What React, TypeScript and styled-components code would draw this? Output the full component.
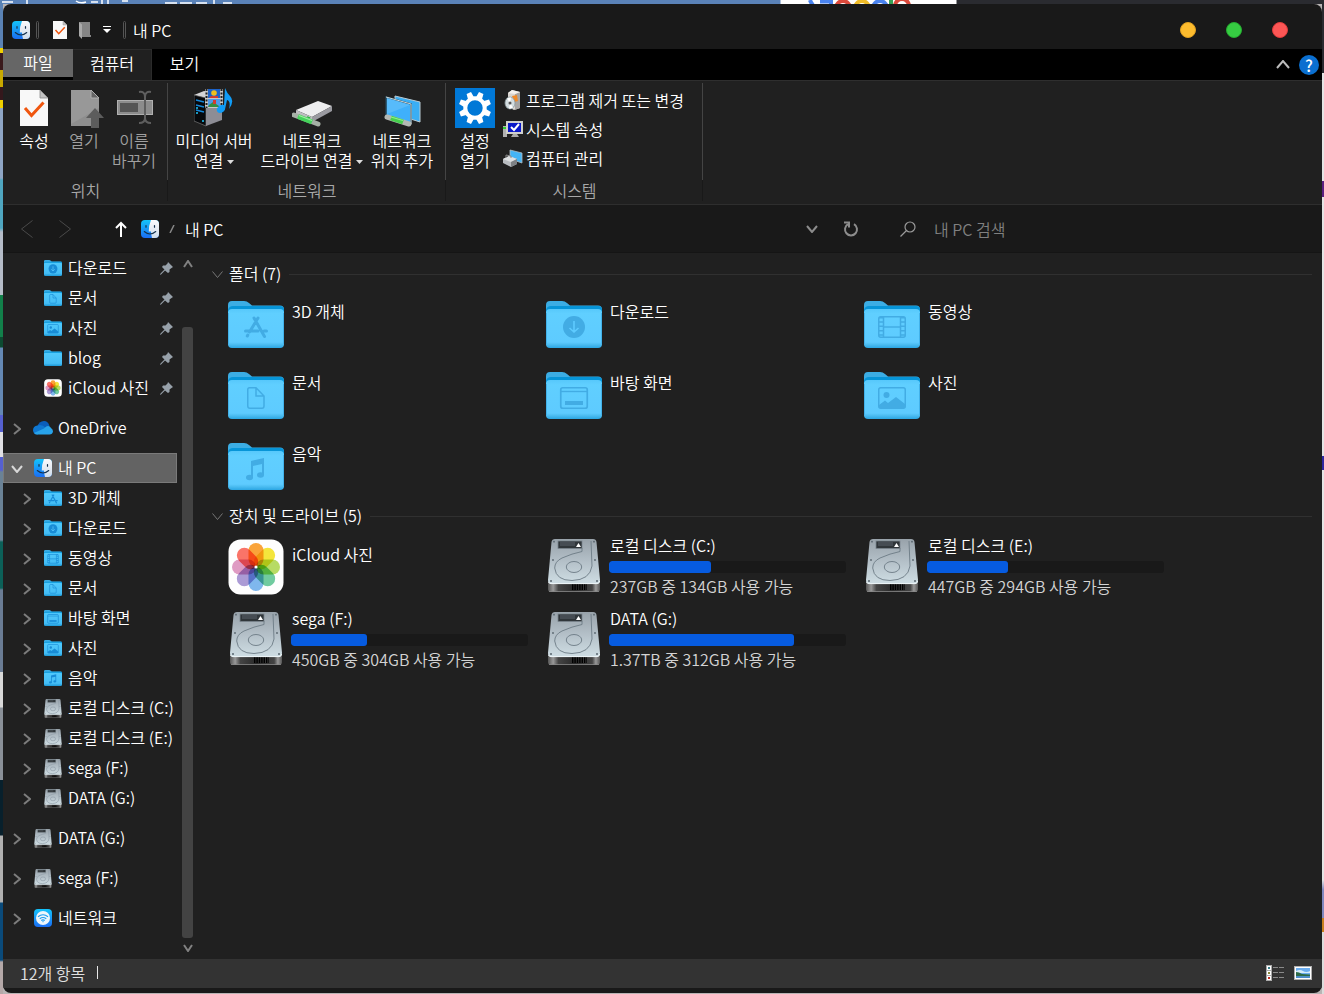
import React from 'react';
import styled, { createGlobalStyle } from 'styled-components';

/* ---------- base ---------- */

const GlobalStyle = createGlobalStyle`
  *, *::before, *::after { box-sizing: border-box; }
  body {
    margin: 0;
    background: #1b1b1b;
    color: #fff;
    font-family: "Noto Sans CJK KR", sans-serif;
    font-size: 16px;
    font-weight: 350;
    line-height: 20px;
  }
  button, input {
    font: inherit;
    color: inherit;
    background: none;
    border: 0;
    padding: 0;
    margin: 0;
  }
  button { cursor: default; white-space: nowrap; }
  svg { display: block; flex: none; }
  ul { list-style: none; margin: 0; padding: 0; }
`;

const Desktop = styled.div`
  min-height: 100vh;
  display: flex;
  flex-direction: column;
  background:
    linear-gradient(#5a82b4 48px, #f0d000 48px 53px, #3a1a1c 53px 70px, #c8a800 70px 87px, #34181c 87px 100px,
      #f0d000 100px 108px, #8ea5c4 108px 178px, #4fa6c0 180px 228px, #b5bcc8 232px 295px, #12804a 295px 337px,
      #0c4a30 337px 347px, #6488b4 348px 415px, #5560d0 415px 432px, #e0e0e4 432px 457px, #5560d0 457px 470px,
      #6a8296 472px 540px, #0c6058 542px 588px, #6a7c94 590px 672px, #d8d8d8 672px 707px, #8a9098 708px 780px,
      #08202c 780px 835px, #b0b0b0 836px 902px, #0a4a7a 903px 960px, #b4a8a8 962px) left / 3px 100% no-repeat,
    linear-gradient(#2a2b30 73px, #e4e4e4 73px 181px, #5a2080 181px 197px, #e4e4e4 197px 456px, #3028a0 456px 470px,
      #e4e4e4 470px 880px, #8088c0 890px 918px, #c88020 918px 932px, #dcdcdc 932px) right / 2px 100% no-repeat,
    linear-gradient(90deg, #5a82b8 780px, #fff 781px 956px, #2a2b30 957px) top / 100% 4px no-repeat,
    #b8b4b4;
`;

const DesktopStrip = styled.div`
  height: 4px;
  overflow: hidden;
`;

const Window = styled.div`
  flex: 1;
  display: flex;
  flex-direction: column;
  margin: 0 2px 1px 3px;
  padding-bottom: 5px;
  border-radius: 8px;
  overflow: hidden;
  background: #191919;
`;

/* ---------- title bar ---------- */

const TitleBar = styled.header`
  display: flex;
  align-items: center;
  height: 45px;
  padding: 7px 34px 0 9px;
`;

const TitleGrip = styled.span<{ $before: number; $after: number }>`
  width: 3px;
  height: 18px;
  margin: 0 ${(p) => p.$after}px 0 ${(p) => p.$before}px;
  border: 1px solid #555;
  border-radius: 2px;
`;

const QuickAccess = styled.div`
  display: flex;
  align-items: center;
  gap: 11px;
`;

const Title = styled.span`
  flex: 1;
`;

const WindowControls = styled.div`
  display: flex;
  gap: 30px;
`;

const ControlDot = styled.button<{ $color: string; $edge: string }>`
  width: 16px;
  height: 16px;
  border-radius: 50%;
  background: ${(p) => p.$color};
  border: 1px solid ${(p) => p.$edge};
`;

/* ---------- ribbon ---------- */

const TabRow = styled.nav`
  display: flex;
  align-items: stretch;
  height: 31px;
  background: #000;
`;

const FileTab = styled.button`
  width: 70px;
  height: 28px;
  padding-bottom: 3px;
  background: #666;
`;

const Tab = styled.button<{ $active?: boolean }>`
  width: 79px;
  padding: 0 ${(p) => (p.$active ? '0' : '13px')} 4px 0;
  background: ${(p) => (p.$active ? '#202020' : 'transparent')};
  border: solid ${(p) => (p.$active ? '#2b2b2b' : 'transparent')};
  border-width: 1px 1px 0 0;
`;

const TabTools = styled.div`
  display: flex;
  align-items: center;
  gap: 9px;
  margin-left: auto;
  padding-right: 3px;
`;

const HelpButton = styled.button`
  width: 20px;
  height: 20px;
  border-radius: 50%;
  background: #0a6fd0;
  font-weight: 500;
`;

const Ribbon = styled.section`
  display: flex;
  height: 125px;
  padding-top: 2px;
  background: #202020;
  border: solid #2e2e2e;
  border-width: 1px 0;
`;

const RibbonGroup = styled.div<{ $width: number }>`
  display: flex;
  flex-direction: column;
  min-width: ${(p) => p.$width}px;
  background: linear-gradient(#444 97px, #191919 97px) right top / 1px 118px no-repeat;
`;

const RibbonTools = styled.div<{ $inset: number }>`
  display: flex;
  align-items: flex-start;
  gap: 2px;
  height: 97px;
  padding: 5px 0 0 ${(p) => p.$inset}px;
`;

const RibbonButton = styled.button<{ $muted?: boolean; $width: number }>`
  display: flex;
  flex-direction: column;
  align-items: center;
  gap: 2px;
  width: ${(p) => p.$width}px;
  color: ${(p) => (p.$muted ? '#a0a0a0' : '#fff')};
`;

const IconSlot = styled.span`
  display: flex;
  align-items: center;
  justify-content: center;
  height: 40px;
`;

const RibbonText = styled.span`
  text-align: center;
`;

const CaretIcon = styled.svg`
  display: inline-block;
  margin: 0 0 2px 4px;
  vertical-align: middle;
`;

const RibbonList = styled.div`
  display: flex;
  flex-direction: column;
  gap: 9px;
  margin: 2px 0 0 5px;
`;

const RibbonListButton = styled.button`
  display: flex;
  align-items: center;
  gap: 3px;
  height: 20px;
`;

const GroupLabel = styled.span`
  text-align: center;
  color: #a8a8a8;
`;

/* ---------- address bar ---------- */

const AddressBar = styled.div`
  display: flex;
  align-items: center;
  height: 48px;
  padding: 0 20px 0 18px;
  background: #191919;
  border-bottom: 1px solid #151515;
`;

const NavButtons = styled.div`
  display: flex;
  align-items: center;
  gap: 26px;
  width: 120px;
`;

const UpButton = styled.button`
  margin-left: 18px;
`;

const Crumbs = styled.div`
  flex: 1;
  display: flex;
  align-items: center;
  gap: 10px;
`;

const AddressTools = styled.div`
  display: flex;
  align-items: center;
  gap: 25px;
`;

const SearchBox = styled.label`
  display: flex;
  align-items: center;
  gap: 18px;
  width: 402px;
  margin-left: 41px;
`;

const SearchInput = styled.input`
  flex: 1;
  min-width: 0;
  outline: 0;
  &::placeholder { color: #808080; opacity: 1; }
`;

/* ---------- body ---------- */

const Body = styled.div`
  flex: 1;
  display: flex;
  background: #202020;
`;

const Sidebar = styled.aside`
  display: flex;
  flex: none;
  gap: 5px;
`;

const Tree = styled.ul`
  width: 174px;
`;

const TreeRow = styled.li<{ $gapTop?: boolean; $selected?: boolean; $child?: boolean }>`
  display: flex;
  align-items: center;
  height: 30px;
  margin-top: ${(p) => (p.$gapTop ? '10px' : '0')};
  padding-left: ${(p) => (p.$child ? '16px' : '6px')};
  background: ${(p) => (p.$selected ? '#636363' : 'transparent')};
  box-shadow: ${(p) => (p.$selected ? 'inset 0 0 0 1px #7a7a7a' : 'none')};
  white-space: nowrap;
`;

const Expander = styled.span`
  display: flex;
  justify-content: center;
  width: 16px;
  margin-right: 8px;
  padding-top: 2px;
`;

const TreeIcon = styled.span`
  display: flex;
  justify-content: center;
  width: 20px;
  margin-right: 5px;
`;

const TreeLabel = styled.span`
  flex: 1;
  padding-bottom: 2px;
`;

const PinSlot = styled.span`
  margin-right: 4px;
`;

const ScrollBar = styled.div`
  display: flex;
  flex-direction: column;
  align-items: center;
  width: 11px;
  padding: 7px 0 7px;
`;

const ScrollThumb = styled.div`
  flex: 1;
  width: 11px;
  margin: 59px 0 6px;
  border-radius: 3px;
  background: #434343;
`;

const Main = styled.main`
  flex: 1;
  padding: 6px 10px 0 19px;
`;

const SectionHeader = styled.h2<{ $space: number }>`
  display: flex;
  align-items: center;
  gap: 6px;
  height: 30px;
  margin: 0 0 ${(p) => p.$space}px;
  font-size: 16px;
  font-weight: inherit;
  white-space: nowrap;
  &::after {
    content: "";
    flex: 1;
    height: 1px;
    margin-left: 2px;
    background: #303030;
  }
`;

const SectionTitle = styled.span`
  padding-bottom: 2px;
`;

const ItemGrid = styled.ul<{ $row: number; $gap: number }>`
  display: grid;
  grid-template-columns: repeat(auto-fill, 318px);
  grid-auto-rows: ${(p) => p.$row}px;
  row-gap: ${(p) => p.$gap}px;
  margin-left: 16px;
`;

const FolderTile = styled.li`
  display: flex;
  gap: 8px;
`;

const FolderName = styled.span``;

const DriveTile = styled.li`
  display: flex;
  gap: 7px;
`;

const DriveIconSlot = styled.span`
  margin-top: 4px;
`;

const DriveInfo = styled.div<{ $low?: boolean }>`
  display: flex;
  flex-direction: column;
  width: 237px;
  padding-top: ${(p) => (p.$low ? '9px' : '0')};
`;

const DriveName = styled.span`
  padding-left: 1px;
`;

const Gauge = styled.div`
  height: 12px;
  margin: 6px 0 3px;
  border-radius: 3px;
  background: #191919;
  overflow: hidden;
`;

const GaugeFill = styled.div`
  height: 100%;
  border-radius: 3px;
  background: #065be0;
`;

const Usage = styled.span`
  padding-left: 1px;
  color: #d4d4d4;
`;

/* ---------- status bar ---------- */

const StatusBar = styled.footer`
  display: flex;
  align-items: center;
  gap: 12px;
  height: 29px;
  padding: 0 10px 2px 17px;
  background: #333;
  color: #e0e0e0;
`;

const StatusDivider = styled.span`
  width: 1px;
  height: 13px;
  background: #e8e8e8;
`;

const ViewButtons = styled.div`
  display: flex;
  align-items: center;
  gap: 10px;
  margin-left: auto;
`;

/* ---------- icons ---------- */

type Dir = 'up' | 'down' | 'left' | 'right';

const Chevron = ({ dir, w = 10, h = 6, color = '#888', stroke = 2 }: { dir: Dir; w?: number; h?: number; color?: string; stroke?: number }) => {
  const s = stroke / 2;
  const d = {
    down: `M${s} ${s}L${w / 2} ${h - s}L${w - s} ${s}`,
    up: `M${s} ${h - s}L${w / 2} ${s}L${w - s} ${h - s}`,
    right: `M${s} ${s}L${w - s} ${h / 2}L${s} ${h - s}`,
    left: `M${w - s} ${s}L${s} ${h / 2}L${w - s} ${h - s}`,
  }[dir];
  return (
    <svg width={w} height={h} aria-hidden="true">
      <path d={d} fill="none" stroke={color} strokeWidth={stroke} />
    </svg>
  );
};

const Caret = () => (
  <CaretIcon width="7" height="4" aria-hidden="true"><path d="M0 0H7L3.5 4Z" fill="#ddd" /></CaretIcon>
);

const FinderIcon = ({ size = 18 }: { size?: number }) => (
  <svg width={size} height={size} viewBox="0 0 36 36" aria-hidden="true">
    <defs>
      <linearGradient id="fBlue" x1="0" y1="0" x2="0" y2="1">
        <stop offset="0" stopColor="#14c4fb" /><stop offset="1" stopColor="#1a6df2" />
      </linearGradient>
      <linearGradient id="fWhite" x1="0" y1="0" x2="0" y2="1">
        <stop offset="0" stopColor="#fbfafc" /><stop offset="1" stopColor="#cfdcea" />
      </linearGradient>
    </defs>
    <rect width="36" height="36" rx="8" fill="url(#fBlue)" />
    <path d="M20 0H28Q36 0 36 8V28Q36 36 28 36H22Q20.500 31 20 23H15.500Q15 12 20 0Z" fill="url(#fWhite)" />
    <path d="M10 11V14.500M27 11V14.500" stroke="#14304c" strokeWidth="2.400" strokeLinecap="round" />
    <path d="M6.500 23Q18 33 29.500 23" fill="none" stroke="#14304c" strokeWidth="2.200" strokeLinecap="round" />
  </svg>
);

const CheckDoc = ({ w, h }: { w: number; h: number }) => (
  <svg width={w} height={h} viewBox="0 0 28 36" aria-hidden="true">
    <path d="M0 0H20L28 8V36H0Z" fill="#f8f8f8" />
    <path d="M20 0V8H28Z" fill="#c4c4c4" stroke="#8a8a8a" strokeWidth="0.800" />
    <path d="M5 18L11.500 25.500L23.500 12.500" fill="none" stroke="#f0560f" strokeWidth="3" />
  </svg>
);

const GreyFolder = () => (
  <svg width="14" height="18" viewBox="0 0 14 18" aria-hidden="true">
    <path d="M1 1H12V14H13V16H4Z" fill="#858585" /><path d="M1 1L4 3.500V18L1 15Z" fill="#aaa" />
  </svg>
);

const QuickMenu = () => (
  <svg width="8" height="8" aria-hidden="true"><path d="M0 0.500H8" stroke="#fff" /><path d="M0 3H8L4 7Z" fill="#fff" /></svg>
);

const OpenDoc = () => (
  <svg width="40" height="40" viewBox="0 0 40 40" aria-hidden="true">
    <path d="M7 2H27L35 10V38H7Z" fill="#8e8e8e" />
    <path d="M7 2H27L35 10V20L7 36Z" fill="#989898" />
    <path d="M27 2V10H35Z" fill="#666" stroke="#b0b0b0" />
    <path d="M31 20L40 30H35V40H27V30H22Z" fill="#5c5c5c" />
  </svg>
);

const RenameIcon = () => (
  <svg width="40" height="40" viewBox="0 0 40 40" aria-hidden="true">
    <rect x="3" y="12" width="36" height="15" fill="#b0b0b0" />
    <rect x="4" y="13" width="34" height="13" fill="#8c8c8c" />
    <rect x="6" y="15" width="18" height="9" fill="#555" />
    <path d="M25 4Q31 3 31 9V30Q31 35 25 35M37 4Q31 3 31 9M31 30Q31 35 37 35" fill="none" stroke="#5e5e5e" strokeWidth="2" />
  </svg>
);

const MediaServerIcon = () => (
  <svg width="40" height="40" viewBox="0 0 40 40" aria-hidden="true">
    <path d="M0 7L10 3L28 6L12 10Z" fill="#d4d4d6" />
    <path d="M0 7L12 10V38L0 33Z" fill="#07090c" stroke="#777" strokeWidth="0.700" />
    <path d="M12 10L28 6V32L12 38Z" fill="#8d8d95" />
    <path d="M2 12L10 14M2 17L10 19M2 22L10 24" stroke="#1587d8" strokeWidth="1.300" />
    <path d="M2 20h2M2 25h2M8 33h2" stroke="#20c8f8" strokeWidth="1.600" />
    <rect x="11" y="1" width="18" height="19" fill="#c8c8c8" />
    <rect x="14" y="1" width="12" height="9" fill="#1c62c8" /><rect x="14" y="11" width="12" height="8" fill="#4e9bea" />
    <path d="M12.500 1V20M27.500 1V20" stroke="#222" strokeWidth="2" strokeDasharray="2 1.500" />
    <circle cx="20" cy="5" r="2.800" fill="#f0c020" /><path d="M17 8H24V10H15Z" fill="#d43a30" />
    <path d="M15 17L19 14L25 18V19H14Z" fill="#348f42" /><path d="M19 12H22V16H19Z" fill="#d43a30" />
    <path d="M31 0Q33 5 36 8Q41 13 35 21Q37 13 33 12L31.500 19Q31 25 25 25Q21 23 24 19Q27 16 30 17Z" fill="#109cf6" />
  </svg>
);

const NetDriveIcon = () => (
  <svg width="40" height="40" viewBox="0 0 40 40" aria-hidden="true">
    <path d="M4 22L26 13L40 18L20 29Z" fill="#eeeeef" />
    <path d="M4 22L20 29V34L4 27Z" fill="#bdbdbf" /><path d="M20 29L40 18V23L20 34Z" fill="#9a9aa0" />
    <path d="M15 29L18 30.300" stroke="#16b82b" strokeWidth="1.800" />
    <path d="M2 27L26 36" stroke="#a6b0a6" strokeWidth="5" strokeLinecap="round" />
    <path d="M6 28.500L20 34" stroke="#44d25a" strokeWidth="5" /><path d="M7 27.500L20 32.500" stroke="#9bf0a0" strokeWidth="1.300" />
  </svg>
);

const NetPlaceIcon = () => (
  <svg width="40" height="40" viewBox="0 0 40 40" aria-hidden="true">
    <path d="M13 8L38 14V34L13 26Z" fill="#3aaef4" stroke="#b9cbd4" strokeWidth="1" />
    <path d="M4 9L29 16V36L4 29Z" fill="#3fb0fb" stroke="#26404e" strokeWidth="1.500" />
    <path d="M4 9L29 16V36" fill="none" stroke="#c9d8de" strokeWidth="1" />
    <path d="M5 10L28 17L5 26Z" fill="#68c3fc" opacity="0.600" />
    <path d="M5 29L27 36" stroke="#b4b8b4" strokeWidth="5" strokeLinecap="round" />
    <path d="M9 30L21 34" stroke="#46cf4d" strokeWidth="5" /><path d="M9 29L21 32.500" stroke="#90ec90" strokeWidth="1.200" />
  </svg>
);

const SettingsIcon = () => (
  <svg width="40" height="40" viewBox="0 0 40 40" aria-hidden="true">
    <rect width="40" height="40" fill="#0078d7" />
    <g fill="#fff">
      {[22.5, 67.5, 112.5, 157.5, 202.5, 247.5, 292.5, 337.5].map((a) => (
        <path key={a} d="M16.800 10L17.600 3.800H22.400L23.200 10Z" transform={`rotate(${a} 20 20)`} />
      ))}
    </g>
    <circle cx="20" cy="20" r="9.700" fill="none" stroke="#fff" strokeWidth="4" />
  </svg>
);

const ProgramsIcon = () => (
  <svg width="20" height="20" viewBox="0 0 20 20" aria-hidden="true">
    <path d="M5 3L9 0L17 2V18L11 20L5 17Z" fill="#d9d5d0" /><path d="M12 4L17 2V18L12 20Z" fill="#a7a5a3" />
    <path d="M5 3L9 0L17 2L12 4Z" fill="#f3f1ee" /><path d="M9 6L14 5L15 11L11 12Z" fill="#f08a28" />
    <ellipse cx="7" cy="13" rx="5" ry="6" fill="#d3dde0" stroke="#88969a" strokeWidth="0.800" />
    <path d="M7 13L4 8.500Q6 7 8 7.500ZM7 13L10 17.500Q8 19 6 18.500Z" fill="#fff" /><circle cx="7" cy="13" r="1.500" fill="#555" />
  </svg>
);

const SystemIcon = () => (
  <svg width="20" height="20" viewBox="0 0 20 20" aria-hidden="true">
    <rect x="0" y="7" width="4" height="11" fill="#b0b0b0" /><rect x="0" y="8" width="3" height="2" fill="#2fd02f" />
    <path d="M3 2H20V15H3Z" fill="#d0d0cc" /><rect x="5" y="4" width="13" height="9" fill="#0a18c8" />
    <path d="M8 8L11 11L16 5" fill="none" stroke="#fff" strokeWidth="2" /><path d="M10 15H14L16 18H8Z" fill="#aaa" />
  </svg>
);

const ManageIcon = () => (
  <svg width="20" height="20" viewBox="0 0 20 20" aria-hidden="true">
    <path d="M7 2L19 5V15L7 11Z" fill="#45b4f5" stroke="#b0bcc4" strokeWidth="0.800" />
    <path d="M0 11L6 8L14 11V16L8 19L0 15Z" fill="#b8bcc0" /><path d="M0 11L6 8L14 11L8 14Z" fill="#dde0e2" />
    <path d="M3 10V7L8 8V10" fill="none" stroke="#888" /><path d="M8 14V19L14 16V11Z" fill="#7d8185" />
  </svg>
);

const UpArrow = () => (
  <svg width="12" height="16" viewBox="0 0 12 16" aria-hidden="true">
    <path d="M6 16V2M1 7L6 2L11 7" fill="none" stroke="#fff" strokeWidth="2" />
  </svg>
);

const RefreshIcon = () => (
  <svg width="16" height="16" viewBox="0 0 16 16" aria-hidden="true">
    <path d="M5 3.200A6 6 0 1 0 11 3.200" fill="none" stroke="#8c8c8c" strokeWidth="2" />
    <path d="M1 1.500H6V6.500" fill="none" stroke="#8c8c8c" strokeWidth="2" />
  </svg>
);

const SearchIcon = () => (
  <svg width="16" height="16" viewBox="0 0 16 16" aria-hidden="true">
    <circle cx="10" cy="6" r="5" fill="none" stroke="#9a9a9a" strokeWidth="1.200" />
    <path d="M6.500 9.500L0.500 15.500" stroke="#9a9a9a" strokeWidth="1.200" />
  </svg>
);

const PinIcon = () => (
  <svg width="13" height="13" viewBox="0 0 13 13" aria-hidden="true">
    <path d="M8 0L13 5L11.500 6L9.500 7.500L9.500 10L8 11L5 8.500L1 12.500L0 13L0.500 11.500L4.500 7.500L2 5L3 3.500H5.500L7.500 1.500Z" fill="#97a1aa" />
  </svg>
);

type Glyph = 'apps' | 'download' | 'movie' | 'doc' | 'desktop' | 'photo' | 'music' | 'none';

const glyphs: Record<Glyph, (c: string) => React.ReactNode> = {
  none: () => null,
  apps: (c) => (
    <g stroke={c} strokeWidth="3" strokeLinecap="round" fill="none">
      <path d="M17.500 30H30M36 30H38.500M26 17L36.500 35.500M30 17L21.500 31M19.800 34L19.300 35" />
    </g>
  ),
  download: (c) => (
    <g><circle cx="28" cy="26" r="11" fill={c} /><path d="M28 20V31M23.500 27L28 31L32.500 27" fill="none" stroke="#5ecbff" strokeWidth="1.600" /></g>
  ),
  movie: (c) => (
    <g fill="none" stroke={c}>
      <rect x="14.750" y="15.750" width="26.500" height="20.500" rx="2" strokeWidth="1.500" />
      <path d="M19.500 16V36M36.500 16V36" strokeWidth="1.500" /><path d="M19 26H37" strokeWidth="1.500" />
      <path d="M17 16V36M39 16V36" strokeWidth="4" strokeDasharray="1.500 2.800" />
    </g>
  ),
  doc: (c) => (
    <path d="M21.500 15.750H28L36 24V34Q36 36.250 34 36.250H22Q19.750 36.250 19.750 34V17.500Q19.750 15.750 21.500 15.750ZM28 16V24H36" fill="none" stroke={c} strokeWidth="1.500" />
  ),
  desktop: (c) => (
    <g><rect x="14.750" y="15.750" width="26.500" height="20.500" rx="2" fill="none" stroke={c} strokeWidth="1.700" />
      <path d="M15 19.500H41" stroke={c} strokeWidth="1.400" /><rect x="19" y="29" width="18" height="4" fill={c} /></g>
  ),
  photo: (c) => (
    <g><rect x="14.750" y="15.750" width="26.500" height="20.500" rx="2" fill="none" stroke={c} strokeWidth="1.500" />
      <circle cx="22.500" cy="23" r="3" fill={c} /><path d="M15 33L21 28.500L24 31L32 25L41 32V36H15Z" fill={c} /></g>
  ),
  music: (c) => (
    <g fill={c}><path d="M23 18L36 15V32H34V21L25 23V35H23Z" /><ellipse cx="21.500" cy="34.500" rx="3.500" ry="2.700" /><ellipse cx="32.500" cy="32" rx="3.500" ry="2.700" /></g>
  ),
};

const FolderIcon = ({ glyph, small }: { glyph: Glyph; small?: boolean }) => (
  <svg width={small ? 18 : 56} height={small ? 16 : 47} viewBox="0 0 56 47" preserveAspectRatio="none" aria-hidden="true">
    <defs>
      <linearGradient id="folderFront" x1="0" y1="0" x2="0" y2="1">
        <stop offset="0" stopColor="#57c8fb" /><stop offset="0.120" stopColor="#60cfff" /><stop offset="0.850" stopColor="#5ecbff" />
        <stop offset="0.910" stopColor="#4cbdf2" /><stop offset="1" stopColor="#2ba6e3" />
      </linearGradient>
      <linearGradient id="folderSmall" x1="0" y1="0" x2="0" y2="1">
        <stop offset="0" stopColor="#50c9fc" /><stop offset="0.800" stopColor="#44bdf5" /><stop offset="1" stopColor="#1c98d6" />
      </linearGradient>
    </defs>
    <path d="M0 4Q0 0 4 0H16Q19 0 21 2L24 4.500H52Q56 4.500 56 8.500V20H0Z" fill="#3cade4" />
    <path d="M0 9Q1 5 5 5H52Q56 5 56 9V20H0Z" fill="#0795d8" />
    <path d="M0 12Q0 8 4 8H52Q56 8 56 12V43Q56 47 52 47H4Q0 47 0 43Z" fill={small ? 'url(#folderSmall)' : 'url(#folderFront)'} />
    {!small && <path d="M0.500 12V43M55.500 12V43" stroke="#42b2ea" strokeWidth="1" />}
    {small
      ? <g transform="translate(-7 -6.500) scale(1.250)">{glyphs[glyph]('#188cd6')}</g>
      : glyphs[glyph]('#42ace4')}
  </svg>
);

const petals = ['#fba53a', '#f5e63c', '#b8dc64', '#70cca0', '#80b8ee', '#ac9cd6', '#e09cc4', '#fb7468'];

const PhotosIcon = ({ size }: { size: number }) => (
  <svg width={size} height={size} viewBox="0 0 56 56" style={{ isolation: 'isolate' }} aria-hidden="true">
    <rect x="0.500" y="0.500" width="55" height="55" rx="12" fill="#fefefe" />
    {petals.map((c, i) => (
      <rect key={c} x="20.500" y="4" width="15" height="24" rx="7.500" fill={c} transform={`rotate(${i * 45} 28 28)`} style={{ mixBlendMode: 'multiply' }} />
    ))}
    <circle cx="28" cy="28" r="1.600" fill="#fff" />
  </svg>
);

const DriveIcon = ({ small }: { small?: boolean }) => (
  <svg width={small ? 18 : 56} height={small ? 19 : 56} viewBox={small ? '1 0 54 54' : '0 0 56 56'} preserveAspectRatio="none" aria-hidden="true">
    <defs>
      <linearGradient id="hddTop" x1="0" y1="0" x2="0" y2="1">
        <stop offset="0" stopColor="#98a2aa" /><stop offset="0.500" stopColor="#b4c0c8" /><stop offset="1" stopColor="#cfdee4" />
      </linearGradient>
      <linearGradient id="hddBase" x1="0" y1="0" x2="1" y2="0">
        <stop offset="0" stopColor="#555" /><stop offset="0.100" stopColor="#999" /><stop offset="0.200" stopColor="#444" />
        <stop offset="0.500" stopColor="#2a2a2a" /><stop offset="0.850" stopColor="#444" /><stop offset="0.920" stopColor="#999" /><stop offset="1" stopColor="#555" />
      </linearGradient>
    </defs>
    <path d="M2 42H54V50Q54 53 51 53H5Q2 53 2 50Z" fill="url(#hddBase)" />
    <path d="M26 48H41" stroke="#000" strokeWidth="6" strokeDasharray="1.400 1" />
    <path d="M3 52.500H53" stroke="#888" strokeWidth="0.800" />
    <path d="M9 0H47Q50 0 50.500 3L54 41Q54 45 51 45H5Q2 45 2 41L5.500 3Q6 0 9 0Z" fill="url(#hddTop)" />
    <path d="M2.500 43Q3.500 44.600 5 44.600H51Q53 44.600 53.700 42" fill="none" stroke="#eef6f8" strokeWidth="1" />
    <g fill="none" stroke={small ? '#8e9ca6' : '#6c7a84'} strokeWidth={small ? 1.8 : 0.9}>
      <path d="M36 9V12.500Q26 14.500 16 19Q8.700 22.500 8.700 29Q10 41.500 26 41.500Q44 41 46 27L45 2" />
      <ellipse cx="28" cy="28" rx="7.700" ry="5.500" />
    </g>
    <rect x="12" y="2" width="24" height="7.500" fill="#30363a" stroke="#7a868e" strokeWidth="0.800" />
    <path d="M14 4H29M14 6H29" stroke="#687078" strokeWidth="0.800" />
    {!small && <path d="M30 8H35L32.500 4Z" fill="#fff" />}
    <g fill="#59656e"><circle cx="8" cy="2.700" r="0.900" /><circle cx="48" cy="2.700" r="0.900" /><circle cx="7" cy="21" r="0.900" />
      <circle cx="49" cy="21" r="0.900" /><circle cx="5" cy="42" r="1" /><circle cx="51" cy="42" r="1" /></g>
  </svg>
);

const OneDriveIcon = () => (
  <svg width="20" height="14" viewBox="0 0 20 14" aria-hidden="true">
    <path d="M4 6Q6 0 11 0Q15 0 16.500 5L8 9Z" fill="#0a5ebc" />
    <path d="M4.500 4.500Q0 5 0 9.500Q0.500 13.500 4.500 13.500L13 7Q9 3 4.500 4.500Z" fill="#0f78d2" />
    <path d="M12 6.500Q16 3.500 18 7Q20 8 20 10.500Q19.500 13.500 16.500 13.500H4.500Q2 13.500 1 12L11 7.500Z" fill="#28a3ea" />
  </svg>
);

const NetworkIcon = () => (
  <svg width="18" height="18" viewBox="0 0 36 36" aria-hidden="true">
    <rect width="36" height="36" rx="8" fill="url(#fBlue)" />
    <circle cx="18" cy="18" r="14" fill="#eef6fb" />
    <g fill="none" stroke="#1f9df0" strokeWidth="2.400"><path d="M8 15.500Q18 7.500 28 15.500" /><path d="M11.500 19.500Q18 14.500 24.500 19.500" /><path d="M14.500 23Q18 20.500 21.500 23" /></g>
    <path d="M16 25L18 27L20 25Q18 23.500 16 25Z" fill="#1f9df0" />
  </svg>
);

const ListViewIcon = () => (
  <svg width="18" height="16" viewBox="0 0 18 16" aria-hidden="true">
    <rect width="6" height="16" fill="#aaa" />
    <path d="M1 1H5V5H1ZM1 6H5V10H1ZM1 11H5V15H1Z" fill="#fff" />
    <rect x="2" y="2" width="2" height="2" fill="#36808c" /><rect x="2" y="7" width="2" height="2" fill="#8a8a3c" /><rect x="2" y="12" width="2" height="2" fill="#c42c20" />
    <path d="M7 2.500H12M13 2.500H18M7 7.500H12M13 7.500H18M7 12.500H12M13 12.500H18" stroke="#8a8a8a" />
  </svg>
);

const TileViewIcon = () => (
  <svg width="18" height="14" viewBox="0 0 18 14" aria-hidden="true">
    <rect width="18" height="14" fill="#b0b0b0" /><rect x="1" y="1" width="16" height="12" fill="#fff" />
    <rect x="2" y="2" width="14" height="10" fill="#6caef0" /><path d="M2 5Q6 3 9 5T16 5V7H2Z" fill="#d5ebfa" />
    <path d="M2 6Q5 6 8 8L16 8.500V10H2Z" fill="#2d6a48" /><path d="M2 10H16V12H2Z" fill="#4c8cc8" />
  </svg>
);

const DesktopEdge = () => (
  <svg width="1324" height="4" aria-hidden="true">
    <g fill="none" strokeWidth="4">
      <path d="M810 0Q811 3 813 5M820 1.500H831V6" stroke="#4a84f0" />
      <circle cx="843" cy="8" r="7" stroke="#dc4a3c" /><circle cx="862" cy="8" r="7" stroke="#f0bc28" />
      <circle cx="880" cy="8" r="7" stroke="#4a84f0" /><path d="M891 0V4" stroke="#38a255" /><circle cx="902" cy="6" r="7" stroke="#dc4a3c" />
    </g>
    <path d="M2 2H13M27 0V4M76 1Q80 4 86 2M91 2H98M102 0V4M108 0V4M122 1H128M165 3H177M180 3H192M196 3H207M214 0V4M223 3H232" stroke="#fff" strokeWidth="1.500" fill="none" />
  </svg>
);

/* ---------- data ---------- */

interface TreeEntry {
  label: string;
  icon: React.ReactNode;
  level: 'pinned' | 'child' | 'root';
  open?: boolean;
}

const smallFolder = (g: Glyph) => <FolderIcon glyph={g} small />;
const smallDrive = <DriveIcon small />;

const tree: TreeEntry[] = [
  { label: '다운로드', icon: smallFolder('download'), level: 'pinned' },
  { label: '문서', icon: smallFolder('doc'), level: 'pinned' },
  { label: '사진', icon: smallFolder('photo'), level: 'pinned' },
  { label: 'blog', icon: smallFolder('none'), level: 'pinned' },
  { label: 'iCloud 사진', icon: <PhotosIcon size={18} />, level: 'pinned' },
  { label: 'OneDrive', icon: <OneDriveIcon />, level: 'root' },
  { label: '내 PC', icon: <FinderIcon />, level: 'root', open: true },
  { label: '3D 개체', icon: smallFolder('apps'), level: 'child' },
  { label: '다운로드', icon: smallFolder('download'), level: 'child' },
  { label: '동영상', icon: smallFolder('movie'), level: 'child' },
  { label: '문서', icon: smallFolder('doc'), level: 'child' },
  { label: '바탕 화면', icon: smallFolder('desktop'), level: 'child' },
  { label: '사진', icon: smallFolder('photo'), level: 'child' },
  { label: '음악', icon: smallFolder('music'), level: 'child' },
  { label: '로컬 디스크 (C:)', icon: smallDrive, level: 'child' },
  { label: '로컬 디스크 (E:)', icon: smallDrive, level: 'child' },
  { label: 'sega (F:)', icon: smallDrive, level: 'child' },
  { label: 'DATA (G:)', icon: smallDrive, level: 'child' },
  { label: 'DATA (G:)', icon: smallDrive, level: 'root' },
  { label: 'sega (F:)', icon: smallDrive, level: 'root' },
  { label: '네트워크', icon: <NetworkIcon />, level: 'root' },
];

const folders: { name: string; glyph: Glyph }[] = [
  { name: '3D 개체', glyph: 'apps' },
  { name: '다운로드', glyph: 'download' },
  { name: '동영상', glyph: 'movie' },
  { name: '문서', glyph: 'doc' },
  { name: '바탕 화면', glyph: 'desktop' },
  { name: '사진', glyph: 'photo' },
  { name: '음악', glyph: 'music' },
];

const drives: { name: string; usage?: string; used?: number }[] = [
  { name: 'iCloud 사진' },
  { name: '로컬 디스크 (C:)', usage: '237GB 중 134GB 사용 가능', used: 43 },
  { name: '로컬 디스크 (E:)', usage: '447GB 중 294GB 사용 가능', used: 34 },
  { name: 'sega (F:)', usage: '450GB 중 304GB 사용 가능', used: 32 },
  { name: 'DATA (G:)', usage: '1.37TB 중 312GB 사용 가능', used: 78 },
];

/* ---------- app ---------- */

export default function App() {
  return (
    <Desktop>
      <GlobalStyle />
      <DesktopStrip><DesktopEdge /></DesktopStrip>
      <Window>
        <TitleBar>
          <FinderIcon />
          <TitleGrip $before={6} $after={14} />
          <QuickAccess>
            <button aria-label="속성"><CheckDoc w={14} h={18} /></button>
            <button aria-label="새 폴더"><GreyFolder /></button>
            <button aria-label="빠른 실행 도구 모음"><QuickMenu /></button>
          </QuickAccess>
          <TitleGrip $before={12} $after={7} />
          <Title>내 PC</Title>
          <WindowControls>
            <ControlDot $color="#fdbc2e" $edge="#e0a020" aria-label="최소화" />
            <ControlDot $color="#36cc42" $edge="#25ac30" aria-label="최대화" />
            <ControlDot $color="#fc5655" $edge="#e03c3c" aria-label="닫기" />
          </WindowControls>
        </TitleBar>

        <TabRow>
          <FileTab>파일</FileTab>
          <Tab $active>컴퓨터</Tab>
          <Tab>보기</Tab>
          <TabTools>
            <button aria-label="리본 최소화"><Chevron dir="up" w={14} h={9} color="#bbb" /></button>
            <HelpButton aria-label="도움말">?</HelpButton>
          </TabTools>
        </TabRow>

        <Ribbon>
          <RibbonGroup $width={165}>
            <RibbonTools $inset={7}>
              <RibbonButton $width={48}>
                <IconSlot><CheckDoc w={28} h={36} /></IconSlot>
                <RibbonText>속성</RibbonText>
              </RibbonButton>
              <RibbonButton $width={48} $muted>
                <IconSlot><OpenDoc /></IconSlot>
                <RibbonText>열기</RibbonText>
              </RibbonButton>
              <RibbonButton $width={48} $muted>
                <IconSlot><RenameIcon /></IconSlot>
                <RibbonText>이름<br />바꾸기</RibbonText>
              </RibbonButton>
            </RibbonTools>
            <GroupLabel>위치</GroupLabel>
          </RibbonGroup>
          <RibbonGroup $width={278}>
            <RibbonTools $inset={4}>
              <RibbonButton $width={84}>
                <IconSlot><MediaServerIcon /></IconSlot>
                <RibbonText>미디어 서버<br />연결<Caret /></RibbonText>
              </RibbonButton>
              <RibbonButton $width={108}>
                <IconSlot><NetDriveIcon /></IconSlot>
                <RibbonText>네트워크<br />드라이브 연결<Caret /></RibbonText>
              </RibbonButton>
              <RibbonButton $width={68}>
                <IconSlot><NetPlaceIcon /></IconSlot>
                <RibbonText>네트워크<br />위치 추가</RibbonText>
              </RibbonButton>
            </RibbonTools>
            <GroupLabel>네트워크</GroupLabel>
          </RibbonGroup>
          <RibbonGroup $width={257}>
            <RibbonTools $inset={8}>
              <RibbonButton $width={42}>
                <IconSlot><SettingsIcon /></IconSlot>
                <RibbonText>설정<br />열기</RibbonText>
              </RibbonButton>
              <RibbonList>
                <RibbonListButton><ProgramsIcon />프로그램 제거 또는 변경</RibbonListButton>
                <RibbonListButton><SystemIcon />시스템 속성</RibbonListButton>
                <RibbonListButton><ManageIcon />컴퓨터 관리</RibbonListButton>
              </RibbonList>
            </RibbonTools>
            <GroupLabel>시스템</GroupLabel>
          </RibbonGroup>
        </Ribbon>

        <AddressBar>
          <NavButtons>
            <button aria-label="뒤로"><Chevron dir="left" w={12} h={18} color="#4a4a4a" stroke={1} /></button>
            <button aria-label="앞으로"><Chevron dir="right" w={12} h={18} color="#4a4a4a" stroke={1} /></button>
            <UpButton aria-label="위로"><UpArrow /></UpButton>
          </NavButtons>
          <Crumbs>
            <FinderIcon />
            <svg width="6" height="8" aria-hidden="true"><path d="M1 8L5 0" stroke="#888" strokeWidth="1.500" /></svg>
            <span>내 PC</span>
          </Crumbs>
          <AddressTools>
            <button aria-label="이전 위치"><Chevron dir="down" w={12} h={8} color="#8c8c8c" /></button>
            <button aria-label="새로 고침"><RefreshIcon /></button>
          </AddressTools>
          <SearchBox>
            <SearchIcon />
            <SearchInput type="search" placeholder="내 PC 검색" aria-label="내 PC 검색" />
          </SearchBox>
        </AddressBar>

        <Body>
          <Sidebar>
            <Tree>
              {tree.map((t, i) => (
                <TreeRow key={i} $child={t.level !== 'root'} $gapTop={t.level === 'root'} $selected={t.open}>
                  <Expander>
                    {t.level !== 'pinned' && (t.open
                      ? <Chevron dir="down" w={12} h={8} color="#d8d8d8" />
                      : <Chevron dir="right" w={8} h={12} color="#7c7c7c" />)}
                  </Expander>
                  <TreeIcon>{t.icon}</TreeIcon>
                  <TreeLabel>{t.label}</TreeLabel>
                  {t.level === 'pinned' && <PinSlot><PinIcon /></PinSlot>}
                </TreeRow>
              ))}
            </Tree>
            <ScrollBar>
              <Chevron dir="up" w={10} h={8} color="#808080" />
              <ScrollThumb />
              <Chevron dir="down" w={10} h={8} color="#808080" />
            </ScrollBar>
          </Sidebar>

          <Main>
            <SectionHeader $space={12}>
              <Chevron dir="down" w={11} h={7} color="#777" stroke={1} />
              <SectionTitle>폴더 (7)</SectionTitle>
            </SectionHeader>
            <ItemGrid $row={58} $gap={13}>
              {folders.map((f) => (
                <FolderTile key={f.name}><FolderIcon glyph={f.glyph} /><FolderName>{f.name}</FolderName></FolderTile>
              ))}
            </ItemGrid>
            <SectionHeader $space={4}>
              <Chevron dir="down" w={11} h={7} color="#777" stroke={1} />
              <SectionTitle>장치 및 드라이브 (5)</SectionTitle>
            </SectionHeader>
            <ItemGrid $row={61} $gap={12}>
              {drives.map((d) => (
                <DriveTile key={d.name}>
                  <DriveIconSlot>{d.usage ? <DriveIcon /> : <PhotosIcon size={56} />}</DriveIconSlot>
                  <DriveInfo $low={!d.usage}>
                    <DriveName>{d.name}</DriveName>
                    {d.usage && (
                      <>
                        <Gauge role="meter" aria-label={d.name} aria-valuenow={d.used} aria-valuemin={0} aria-valuemax={100}>
                          <GaugeFill style={{ width: `${d.used}%` }} />
                        </Gauge>
                        <Usage>{d.usage}</Usage>
                      </>
                    )}
                  </DriveInfo>
                </DriveTile>
              ))}
            </ItemGrid>
          </Main>
        </Body>

        <StatusBar>
          <span>12개 항목</span>
          <StatusDivider />
          <ViewButtons>
            <button aria-label="자세히"><ListViewIcon /></button>
            <button aria-label="큰 아이콘"><TileViewIcon /></button>
          </ViewButtons>
        </StatusBar>
      </Window>
    </Desktop>
  );
}
